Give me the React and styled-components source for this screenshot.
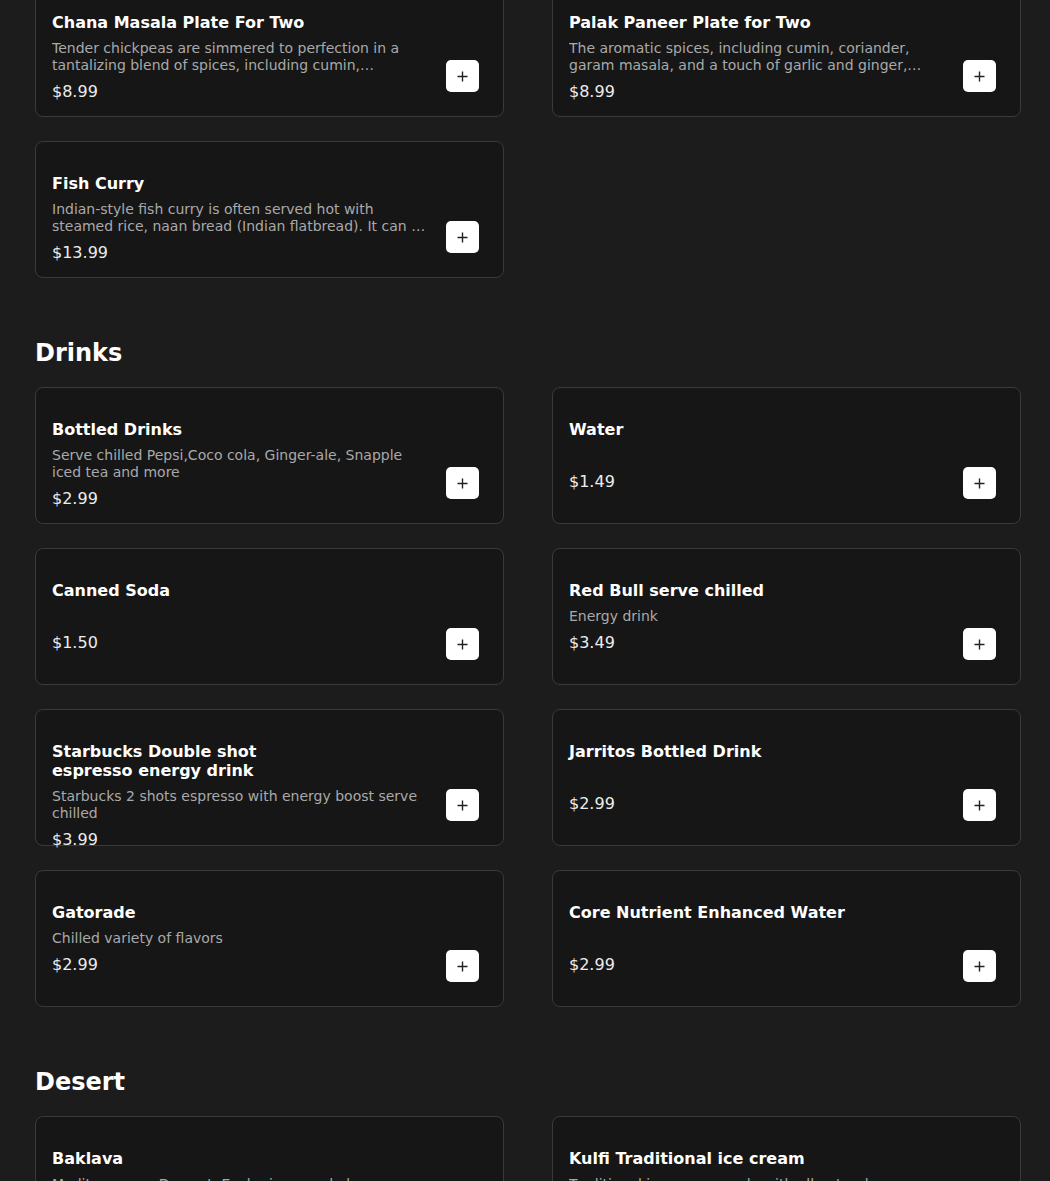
import React from 'react';
import styled, {createGlobalStyle} from 'styled-components';

const GlobalStyle = createGlobalStyle`
	html, body {
		margin: 0;
		padding: 0;
		background: #1c1c1c;
	}

	body {
		font-family: "DejaVu Sans", Verdana, sans-serif;
		color: #fff;
	}
`;

const Page = styled.main`
	margin-top: -20px;
	padding: 0 29px 40px 35px;
`;

const Section = styled.section`
	& + & {
		margin-top: 61px;
	}
`;

const SectionTitle = styled.h2`
	margin: 0 0 20px;
	font-size: 24px;
	font-weight: 700;
	line-height: 28px;
	color: #fff;
`;

const Grid = styled.div`
	display: grid;
	grid-template-columns: 1fr 1fr;
	column-gap: 48px;
	row-gap: 24px;
`;

const Card = styled.div`
	display: flex;
	box-sizing: border-box;
	height: 137px;
	padding: 32px 24px 24px 16px;
	gap: 16px;
	background: #161616;
	border: 1px solid #3a3a3a;
	border-radius: 8px;
`;

const Info = styled.div`
	flex: 1;
	min-width: 0;
`;

const ItemName = styled.h3`
	margin: 0;
	max-width: 285px;
	font-size: 16px;
	font-weight: 700;
	line-height: 19px;
	color: #fff;
`;

const Description = styled.p`
	margin: 8px 0 0;
	min-height: 17px;
	font-size: 14px;
	line-height: 17px;
	color: #a9a9a9;
	display: -webkit-box;
	-webkit-line-clamp: 2;
	-webkit-box-orient: vertical;
	overflow: hidden;
`;

const Price = styled.div`
	margin-top: 8px;
	font-size: 16px;
	line-height: 19px;
	color: #ececec;
`;

const AddButton = styled.button`
	align-self: flex-end;
	flex: none;
	display: flex;
	align-items: center;
	justify-content: center;
	width: 33px;
	height: 32px;
	padding: 0;
	border: none;
	border-radius: 5px;
	background: #fff;
	cursor: pointer;
`;

const PlusIcon = () => (
    <svg width="11" height="11" viewBox="0 0 11 11">
        <path d="M5.5 0.5v10M0.5 5.5h10" stroke="#222" strokeWidth="1.4" fill="none"/>
    </svg>
);

const menu = [
    {
        title: null,
        items: [
            {
                name: 'Chana Masala Plate For Two',
                desc: 'Tender chickpeas are simmered to perfection in a tantalizing blend of spices, including cumin, coriander and turmeric, served with rice and naan.',
                price: '$8.99'
            },
            {
                name: 'Palak Paneer Plate for Two',
                desc: 'The aromatic spices, including cumin, coriander, garam masala, and a touch of garlic and ginger, infuse the spinach with a rich flavour.',
                price: '$8.99'
            },
            {
                name: 'Fish Curry',
                desc: 'Indian-style fish curry is often served hot with steamed rice, naan bread (Indian flatbread). It can be enjoyed with pickles.',
                price: '$13.99'
            }
        ]
    },
    {
        title: 'Drinks',
        items: [
            {name: 'Bottled Drinks', desc: 'Serve chilled Pepsi,Coco cola, Ginger-ale, Snapple iced tea and more', price: '$2.99'},
            {name: 'Water', desc: '', price: '$1.49'},
            {name: 'Canned Soda', desc: '', price: '$1.50'},
            {name: 'Red Bull serve chilled', desc: 'Energy drink', price: '$3.49'},
            {
                name: 'Starbucks Double shot espresso energy drink',
                desc: 'Starbucks 2 shots espresso with energy boost serve chilled',
                price: '$3.99'
            },
            {name: 'Jarritos Bottled Drink', desc: '', price: '$2.99'},
            {name: 'Gatorade', desc: 'Chilled variety of flavors', price: '$2.99'},
            {name: 'Core Nutrient Enhanced Water', desc: '', price: '$2.99'}
        ]
    },
    {
        title: 'Desert',
        items: [
            {name: 'Baklava', desc: 'Mediterranean Dessert. Each piece made by traditional recipe', price: '$4.99'},
            {name: 'Kulfi Traditional ice cream', desc: 'Traditional ice cream made with all natural ingredients', price: '$3.99'}
        ]
    }
];

const MenuItem = ({name, desc, price}) => (
    <Card>
        <Info>
            <ItemName>{name}</ItemName>
            <Description>{desc}</Description>
            <Price>{price}</Price>
        </Info>
        <AddButton aria-label={'Add ' + name}>
            <PlusIcon/>
        </AddButton>
    </Card>
);

export default function App() {
    return (
        <>
            <GlobalStyle/>
            <Page>
                {menu.map((section, i) => (
                    <Section key={i}>
                        {section.title && <SectionTitle>{section.title}</SectionTitle>}
                        <Grid>
                            {section.items.map(item => <MenuItem key={item.name} {...item}/>)}
                        </Grid>
                    </Section>
                ))}
            </Page>
        </>
    );
}
